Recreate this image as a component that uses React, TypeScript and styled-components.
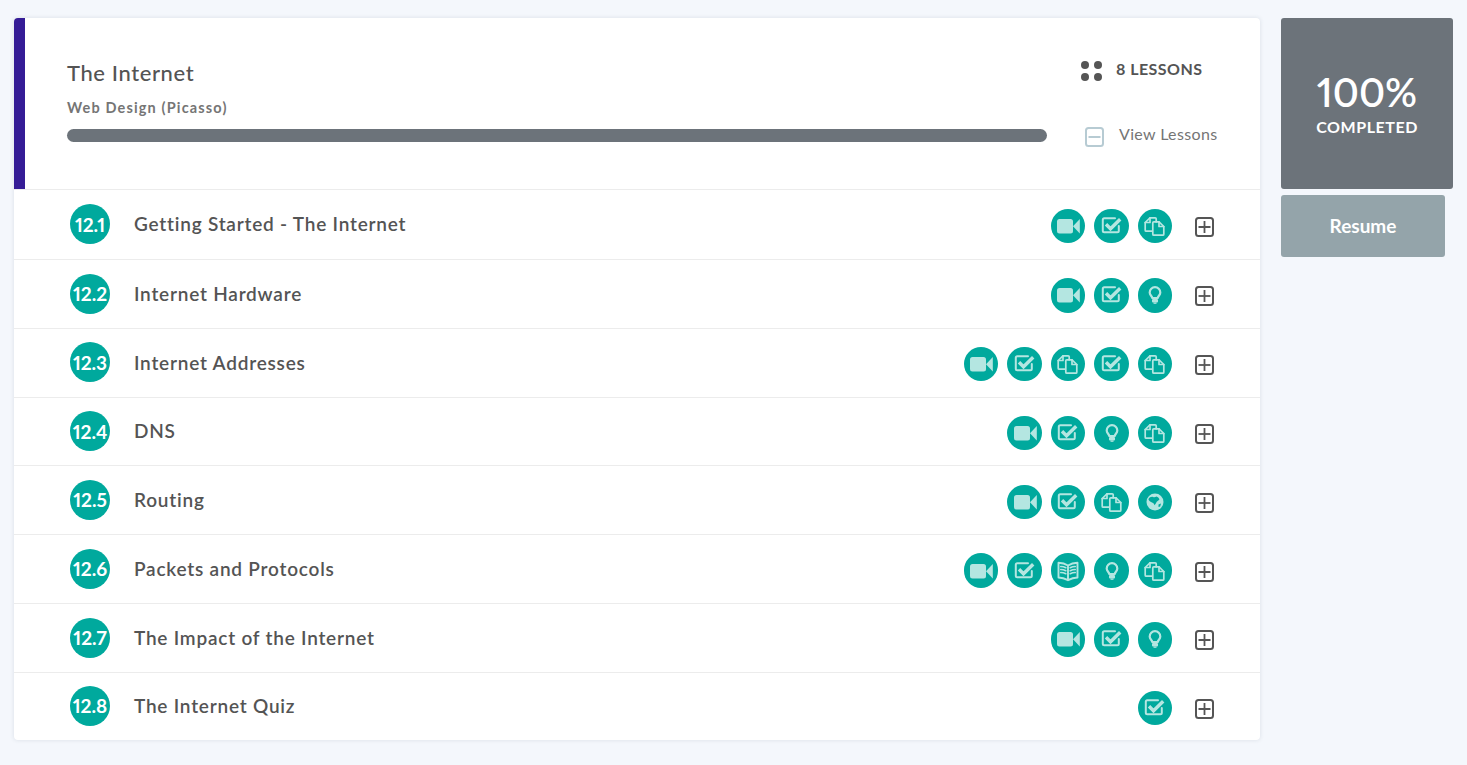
import React from "react";
import styled, { createGlobalStyle } from "styled-components";

const Global = createGlobalStyle`
  html, body { margin: 0; padding: 0; background: #f4f7fc; }
  body { font-family: "Lato", "Open Sans", sans-serif; font-variant-numeric: proportional-nums; }
`;

const Page = styled.div`
  display: flex;
  align-items: flex-start;
  gap: 21px;
  padding: 18px 14px 0;
  height: 765px;
  box-sizing: border-box;
`;
const Card = styled.section`
  width: 1246px;
  flex: none;
  background: #fff;
  border-radius: 4px;
  box-shadow: 0 0 4px rgba(60, 70, 90, 0.14);
  overflow: hidden;
`;
const Header = styled.header`
  display: flex;
  height: 171px;
  box-sizing: border-box;
  border-left: 11px solid #351c96;
  padding: 0 0 0 42px;
`;
const HeaderMain = styled.div`
  width: 980px;
  flex: none;
  padding-top: 42px;
`;
const Title = styled.h1`
  margin: 0;
  font-size: 22px;
  line-height: 26px;
  font-weight: 500;
  letter-spacing: 0.6px;
  color: #545454;
`;
const Subtitle = styled.div`
  margin-top: 12.5px;
  font-size: 14.5px;
  line-height: 18px;
  font-weight: 700;
  letter-spacing: 1.15px;
  color: #757575;
`;
const Track = styled.div`
  margin-top: 12.5px;
  height: 13px;
  border-radius: 7px;
  background: #6c737a;
`;
const HeaderSide = styled.div`
  margin-left: 34px;
  padding-top: 42px;
  display: flex;
  flex-direction: column;
`;
const LessonCount = styled.div`
  display: flex;
  align-items: center;
  gap: 14px;
  height: 22px;
  font-size: 16px;
  font-weight: 700;
  color: #545454;
  letter-spacing: 0.45px;
`;
const CountLabel = styled.span`
  margin-bottom: 6px;
`;
const ViewToggle = styled.div`
  display: flex;
  align-items: center;
  gap: 15px;
  margin-top: 44px;
  margin-left: 4px;
  height: 22px;
  font-size: 16px;
  font-weight: 400;
  letter-spacing: 0.35px;
  color: #757575;
`;
const ToggleLabel = styled.span`
  margin-bottom: 8px;
`;
const Num = styled.div`
  width: 40px;
  height: 40px;
  flex: none;
  border-radius: 50%;
  background: #00a99d;
  color: #fff;
  display: flex;
  align-items: center;
  justify-content: center;
  font-size: 19px;
  font-weight: 700;
  margin-bottom: 0.6px;
`;
const Name = styled.div`
  margin-left: 24px;
  flex: 1;
  font-size: 19px;
  font-weight: 600;
  letter-spacing: 0.78px;
  color: #545454;
  margin-bottom: 1px;
`;
const Row = styled.div`
  display: flex;
  align-items: center;
  height: 68.8px;
  box-sizing: border-box;
  border-top: 1px solid #ececec;
  padding: 0 46px 0 56px;
  &:first-of-type {
    height: 70px;
  }
  &:first-of-type ${Name} {
    margin-bottom: 2.5px;
  }
  &:last-of-type {
    height: 68px;
  }
`;
const Icons = styled.div`
  display: flex;
  gap: 9.2px;
  margin-top: 3px;
`;
const Badge = styled.span`
  width: 34.3px;
  height: 34.3px;
  border-radius: 50%;
  background: #00a99d;
  display: flex;
  align-items: center;
  justify-content: center;
`;
const Expand = styled.span`
  margin-left: 22.8px;
  display: flex;
  margin-top: 5px;
`;
const Side = styled.aside`
  width: 172px;
  flex: none;
  display: flex;
  flex-direction: column;
  gap: 6px;
`;
const Score = styled.div`
  height: 171px;
  border-radius: 3px;
  background: #6c737a;
  color: #fff;
  display: flex;
  flex-direction: column;
  align-items: center;
  padding-top: 50px;
  box-sizing: border-box;
`;
const Percent = styled.div`
  font-size: 39.5px;
  line-height: 48px;
  font-weight: 600;
`;
const ScoreLabel = styled.div`
  font-size: 16px;
  line-height: 22px;
  font-weight: 700;
  letter-spacing: 0.55px;
`;
const Resume = styled.button`
  width: 164px;
  height: 62px;
  border: 0;
  border-radius: 3px;
  background: #94a4aa;
  color: #fff;
  font: 700 19px "Lato", sans-serif;
  padding: 0 0 2px;
`;

const L = "#b4e6e1";
const Svg: React.FC<{ children: React.ReactNode }> = ({ children }) => (
  <svg width="26" height="26" viewBox="0 0 26 26" fill="none" stroke={L} strokeWidth="1.700" strokeLinejoin="round" strokeLinecap="round">
    {children}
  </svg>
);
const Video = () => (
  <Svg>
    <rect x="2" y="6" width="16" height="14.500" rx="2.500" fill={L} stroke="none" />
    <path d="M18 13.200 L24.800 6 V20.500 Z" fill={L} stroke="none" />
  </Svg>
);
const Check = () => (
  <Svg>
    <path d="M19.800 13v4.800a1.500 1.500 0 0 1-1.500 1.500H5.300a1.500 1.500 0 0 1-1.500-1.500V6.800a1.500 1.500 0 0 1 1.500-1.500H16" strokeWidth="2" />
    <path d="M7 11.300 L11.500 15.800 L21.200 6.200" strokeWidth="3.400" strokeLinejoin="miter" strokeLinecap="butt" />
  </Svg>
);
const Docs = () => (
  <Svg>
    <path d="M10 18.200H4.200a1 1 0 0 1-1-1V9.500L8 4.800H13.200a1 1 0 0 1 1 1V8.800" />
    <path d="M8 4.800V9.500H3.200" />
    <path d="M11.800 8.800H17L21.800 13.500V21.200a1 1 0 0 1-1 1H11.800a1 1 0 0 1-1-1V9.800a1 1 0 0 1 1-1Z" />
    <path d="M17 8.800V13.500H21.800" />
  </Svg>
);
const Bulb = () => (
  <Svg>
    <path d="M10.200 16c0-2-2.500-2.800-2.500-5.600a5.300 5.300 0 0 1 10.600 0c0 2.800-2.500 3.600-2.500 5.600Z" strokeWidth="2.200" />
    <rect x="10" y="17" width="6" height="3.500" rx="1" fill={L} stroke="none" />
    <rect x="11.500" y="20.500" width="3" height="1.300" fill={L} stroke="none" />
  </Svg>
);
const Globe = () => (
  <Svg>
    <circle cx="13" cy="13" r="8.500" fill={L} stroke="none" />
    <path d="M6.500 10c1-1.800 3-2.500 4.500-2 1.500.6 2.300 0 3.500-.5 1.300.5 2.500 1.500 3 2.800-1 1.700-2.800 1.800-3.300 3.500-.3 1-1 1.800-1.700 2.500-.5-1.800-1.500-2.300-3-3-1.200-.6-2.300-1.500-3-2.800Z" fill="#00a99d" stroke="none" />
    <path d="M16.500 15.500l2.500-1-.8 3-1.700.6Z" fill="#00a99d" stroke="none" />
  </Svg>
);
const Book = () => (
  <Svg>
    <path d="M13 7.500 C10 5.500 6.500 4.800 3.500 4.800V19.500c3.500 0 6.500 1 9.500 2.700 3-1.700 6-2.700 9.500-2.700V4.800C19.500 4.800 16 5.500 13 7.500ZM13 7.500V22" strokeWidth="1.900" />
    <path d="M5.800 8.500c1.700 0 3.400.4 5 1.200M5.800 11.500c1.700 0 3.400.4 5 1.200M5.800 14.500c1.700 0 3.400.4 5 1.200M20.200 8.500c-1.700 0-3.400.4-5 1.200M20.200 11.500c-1.700 0-3.400.4-5 1.200M20.200 14.500c-1.700 0-3.400.4-5 1.200" strokeWidth="1.700" />
  </Svg>
);

const icons = { v: Video, c: Check, d: Docs, b: Bulb, g: Globe, k: Book };
type Kind = keyof typeof icons;

const BoxIcon: React.FC<{ color: string; plus?: boolean }> = ({ color, plus }) => (
  <svg width="19" height="20" viewBox="0 0 19 20" fill="none" stroke={color} strokeWidth="2">
    <rect x="1" y="1" width="17" height="18" rx="2.500" />
    <path d="M3.500 10H15.500" strokeWidth="1.800" />
    {plus && <path d="M9.500 4V16" strokeWidth="1.800" />}
  </svg>
);

const lessons: { n: string; t: string; i: Kind[] }[] = [
  { n: "12.1", t: "Getting Started - The Internet", i: ["v", "c", "d"] },
  { n: "12.2", t: "Internet Hardware", i: ["v", "c", "b"] },
  { n: "12.3", t: "Internet Addresses", i: ["v", "c", "d", "c", "d"] },
  { n: "12.4", t: "DNS", i: ["v", "c", "b", "d"] },
  { n: "12.5", t: "Routing", i: ["v", "c", "d", "g"] },
  { n: "12.6", t: "Packets and Protocols", i: ["v", "c", "k", "b", "d"] },
  { n: "12.7", t: "The Impact of the Internet", i: ["v", "c", "b"] },
  { n: "12.8", t: "The Internet Quiz", i: ["c"] },
];

export default function App() {
  return (
    <Page>
      <Global />
      <Card>
        <Header>
          <HeaderMain>
            <Title>The Internet</Title>
            <Subtitle>Web Design (Picasso)</Subtitle>
            <Track />
          </HeaderMain>
          <HeaderSide>
            <LessonCount>
              <svg width="21" height="21" viewBox="0 0 21 21" fill="#555">
                <circle cx="4" cy="4" r="4" />
                <circle cx="17" cy="4" r="4" />
                <circle cx="4" cy="16" r="4" />
                <circle cx="17" cy="16" r="4" />
              </svg>
              <CountLabel>8 LESSONS</CountLabel>
            </LessonCount>
            <ViewToggle>
              <BoxIcon color="#b7cbd3" />
              <ToggleLabel>View Lessons</ToggleLabel>
            </ViewToggle>
          </HeaderSide>
        </Header>
        {lessons.map((l) => (
          <Row key={l.n}>
            <Num>{l.n}</Num>
            <Name>{l.t}</Name>
            <Icons>
              {l.i.map((k, idx) => {
                const I = icons[k];
                return (
                  <Badge key={idx}>
                    <I />
                  </Badge>
                );
              })}
            </Icons>
            <Expand>
              <BoxIcon color="#555" plus />
            </Expand>
          </Row>
        ))}
      </Card>
      <Side>
        <Score>
          <Percent>100%</Percent>
          <ScoreLabel>COMPLETED</ScoreLabel>
        </Score>
        <Resume>Resume</Resume>
      </Side>
    </Page>
  );
}
